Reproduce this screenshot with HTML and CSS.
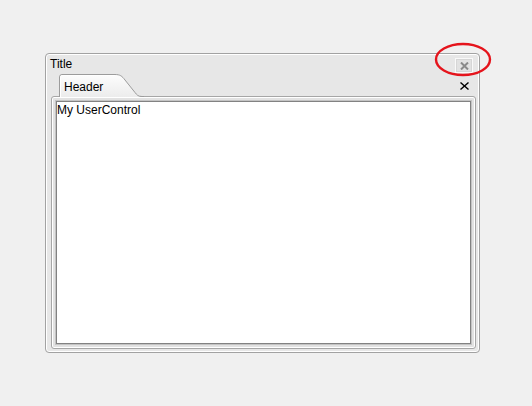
FILE: index.html
```html
<!DOCTYPE html>
<html>
<head>
<meta charset="utf-8">
<link rel="stylesheet" href="styles.css">
</head>
<body>
<div class="window">
  <div class="titlebar">
    <span class="title">Title</span>
    <div class="close-btn">
      <svg width="9" height="8" viewBox="0 0 9 8"><path d="M1 0.5 L8 7.5 M8 0.5 L1 7.5" stroke="#8a8a8a" stroke-width="2"/></svg>
    </div>
  </div>
  <div class="tabrow">
    <div class="tab">
      <svg class="tab-shape" width="86" height="24" viewBox="0 0 86 24">
        <defs>
          <linearGradient id="tg" x1="0" y1="0" x2="0" y2="1">
            <stop offset="0" stop-color="#fdfdfd"/>
            <stop offset="1" stop-color="#ececec"/>
          </linearGradient>
        </defs>
        <path d="M1.5 24 L1.5 4 Q1.5 1.5 4 1.5 L57 1.5 C62 1.5 64 3 67 7 L77 19.5 C79 22 80 23.5 84 23.5 L86 23.5 L86 24 Z" fill="url(#tg)"/>
        <path d="M1.5 24 L1.5 4 Q1.5 1.5 4 1.5 L57 1.5 C62 1.5 64 3 67 7 L77 19.5 C79 22 80 23.5 84 23.5 L86 23.5" fill="none" stroke="#9c9c9c" stroke-width="1"/>
        <path d="M2.5 24 L2.5 4.5 Q2.5 2.5 4.5 2.5 L57 2.5" fill="none" stroke="#ffffff" stroke-width="1"/>
      </svg>
      <span class="tab-label">Header</span>
    </div>
    <svg class="tab-close" width="9" height="8" viewBox="0 0 9 8"><path d="M0.5 0.5 L8.5 7.5 M8.5 0.5 L0.5 7.5" stroke="#000" stroke-width="1.4"/></svg>
  </div>
  <div class="panel">
    <div class="content">My UserControl</div>
  </div>
</div>
<svg class="annot" width="60" height="38" viewBox="0 0 60 38"><ellipse cx="29" cy="17.5" rx="27" ry="15.5" fill="none" stroke="#e5141c" stroke-width="2.4"/></svg>
</body>
</html>
```

FILE: styles.css
```css
html, body {
  margin: 0;
  padding: 0;
}
body {
  background: #f0f0f0;
  width: 532px;
  height: 406px;
  position: relative;
  font-family: "Liberation Sans", Arial, sans-serif;
  font-size: 12px;
  color: #000;
  overflow: hidden;
}
.window {
  box-sizing: border-box;
  margin: 53px 0 0 45px;
  width: 435px;
  height: 300px;
  border: 1px solid #a2a2a2;
  border-radius: 4px;
  background: #e7e7e7;
  box-shadow: inset 0 0 0 1px #ffffff;
  padding: 1px;
  display: flex;
  flex-direction: column;
}
.titlebar {
  height: 18px;
  display: flex;
  align-items: flex-start;
  justify-content: space-between;
}
.title {
  padding-left: 3px;
  line-height: 18px;
}
.close-btn {
  box-sizing: border-box;
  width: 18px;
  height: 15px;
  margin-top: 3px;
  margin-right: 5px;
  border: 1px solid #f9f9f9;
  outline: 1px solid #d6d6d6;
  outline-offset: -2px;
  background: #e2e2e2;
  display: flex;
  align-items: center;
  justify-content: center;
}
.close-btn svg {
  display: block;
}
.tabrow {
  height: 23px;
  display: flex;
  align-items: flex-start;
  justify-content: space-between;
}
.tab {
  position: relative;
  z-index: 1;
  width: 86px;
  height: 24px;
  margin-left: 11px;
}
.tab-shape {
  position: absolute;
  left: 0;
  top: 0;
  display: block;
}
.tab-label {
  position: relative;
  display: block;
  padding: 6px 0 0 6px;
  line-height: 16px;
}
.tab-close {
  display: block;
  margin-top: 9px;
  margin-right: 9px;
}
.panel {
  box-sizing: border-box;
  margin-left: 4px;
  width: 425px;
  height: 253px;
  border: 1px solid #a6a6a6;
  border-radius: 3px;
  background: #ececec;
  box-shadow: inset 0 0 0 1px #ffffff, inset 0 0 0 3px #e2e2e2;
  padding: 4px;
  display: flex;
}
.content {
  flex: 1;
  box-sizing: border-box;
  border: 1px solid #828282;
  box-shadow: 0 0 0 1px #c4c4c4;
  background: #ffffff;
  padding: 0;
  line-height: 17px;
}
.annot {
  position: absolute;
  left: 434px;
  top: 42px;
  display: block;
}
```
